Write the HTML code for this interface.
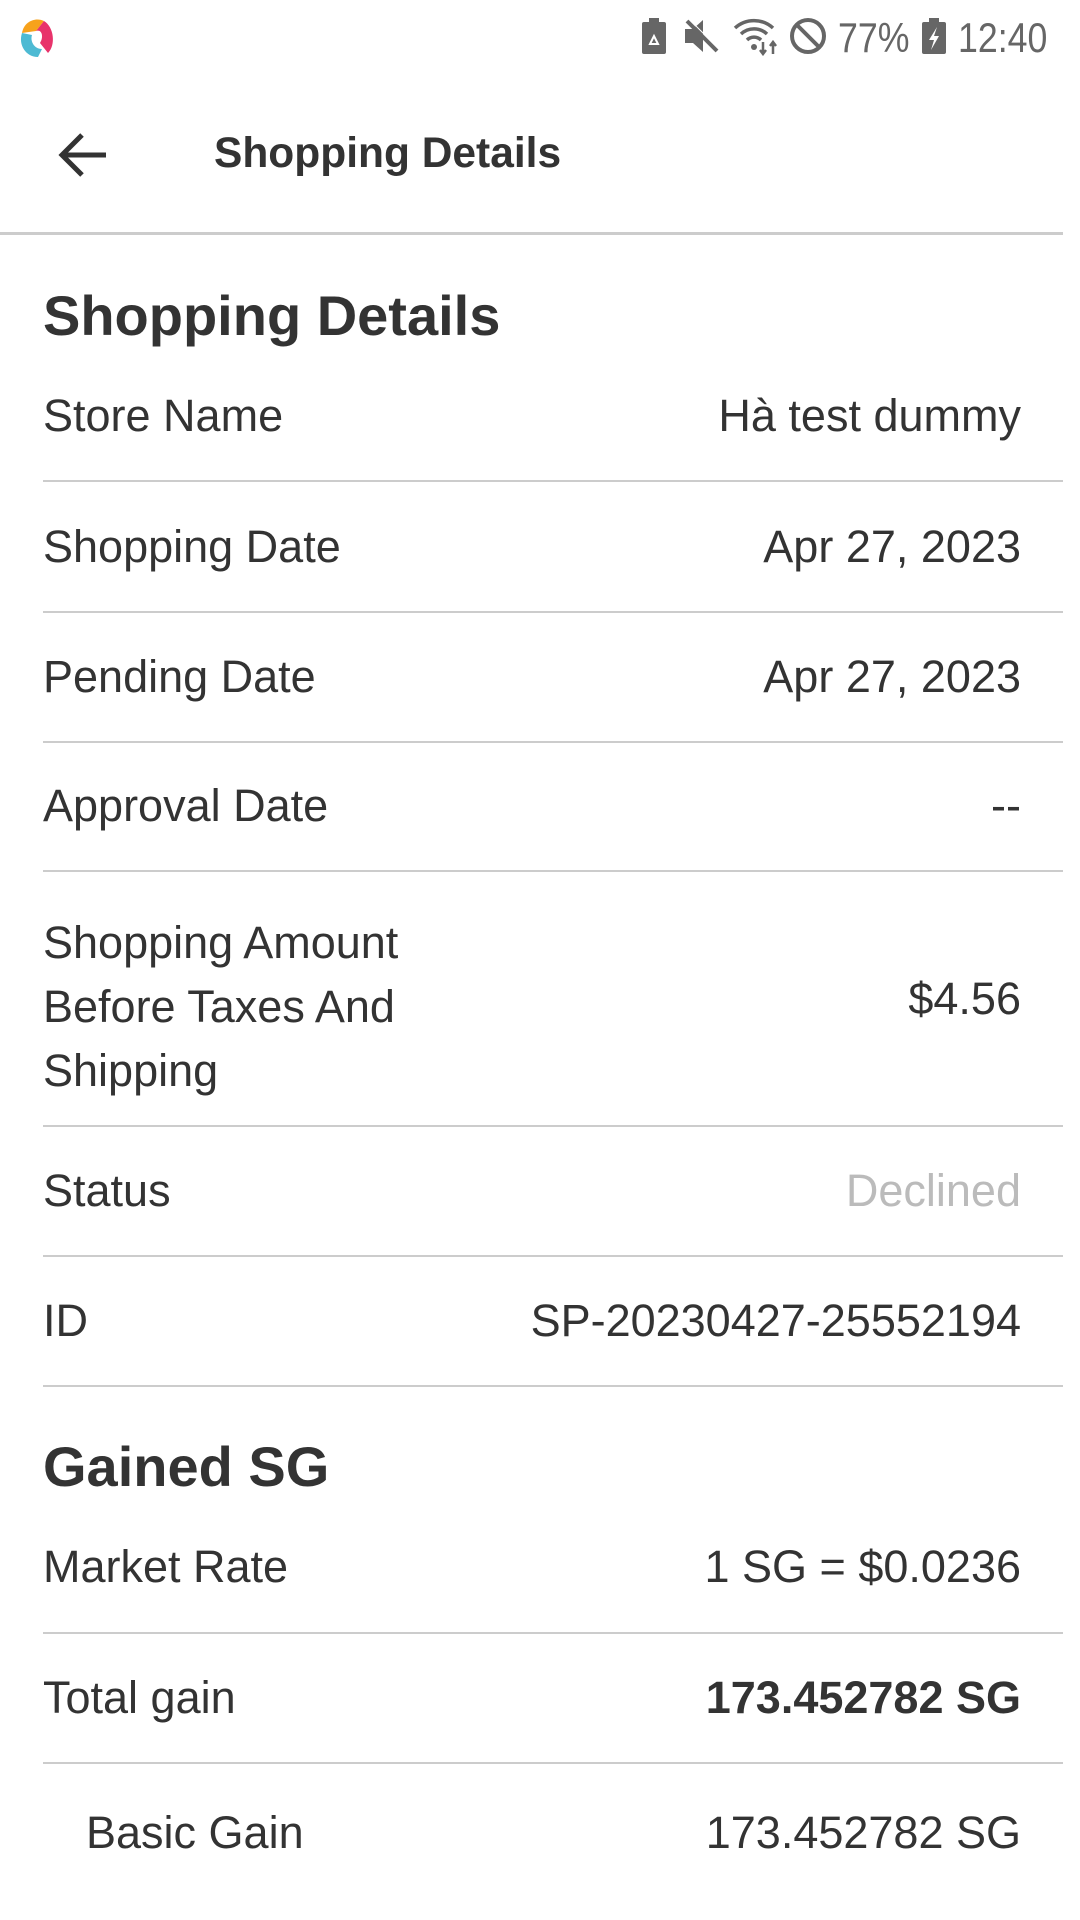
<!DOCTYPE html>
<html><head><meta charset="utf-8">
<style>
*{margin:0;padding:0;box-sizing:border-box}
body{width:1080px;height:1920px;background:#fff;font-family:"Liberation Sans",sans-serif;color:#333;position:relative;overflow:hidden}
.a{position:absolute;white-space:nowrap}
.sb{color:#666;font-size:42px;top:14px;transform:scaleX(0.85);transform-origin:left top}
.l{left:43px;font-size:45px;line-height:48px}
.r{right:59px;font-size:45px;line-height:48px;text-align:right}
.ln{position:absolute;left:43px;width:1020px;height:2px;background:#ccc}
.h{left:43px;font-size:56px;font-weight:bold;color:#333;line-height:64px}
</style></head><body>
<svg class="a" style="left:14px;top:15px" width="46" height="44" viewBox="0 0 46 44">
<path d="M8 18 C10 6 22 2 30 6 L22 16 Z" fill="#f7a21b"/>
<path d="M30 6 C40 12 42 30 34 38 L26 28 C30 22 28 14 22 16 Z" fill="#e8336b"/>
<path d="M8 18 C4 30 12 42 24 42 L28 34 C20 34 16 26 18 20 Z" fill="#4dbad3"/>
</svg>
<svg class="a" style="left:642px;top:18px" width="24" height="36" viewBox="0 0 24 36"><rect x="0" y="4" width="24" height="32" rx="2" fill="#666"/><rect x="7" y="0" width="10" height="5" fill="#666"/><path d="M8 26 L12 18 L16 26 Z" fill="none" stroke="#fff" stroke-width="2"/></svg>
<svg class="a" style="left:683px;top:18px" width="36" height="36" viewBox="0 0 36 36"><path d="M2 11 H10 L20 2 V34 L10 25 H2 Z" fill="#666"/><path d="M4 3 L34 33" stroke="#666" stroke-width="4"/><path d="M4 3 L34 33" stroke="#fff" stroke-width="1" transform="translate(2,-2)"/></svg>
<svg class="a" style="left:733px;top:16px" width="46" height="40" viewBox="0 0 46 40"><path d="M2 12 A28 28 0 0 1 40 12 M8 18 A19 19 0 0 1 34 18 M14 24 A10 10 0 0 1 28 24" fill="none" stroke="#666" stroke-width="3.5"/><circle cx="21" cy="31" r="3" fill="#666"/><path d="M30 26 V38 M27 34 L30 38 L33 34 M40 38 V26 M37 30 L40 26 L43 30" stroke="#666" stroke-width="2.5" fill="none"/></svg>
<svg class="a" style="left:789px;top:17px" width="38" height="38" viewBox="0 0 38 38"><circle cx="19" cy="19" r="16" fill="none" stroke="#666" stroke-width="4"/><path d="M8 8 L30 30" stroke="#666" stroke-width="4"/></svg>
<div class="a sb" style="left:838px">77%</div>
<svg class="a" style="left:922px;top:18px" width="24" height="36" viewBox="0 0 24 36"><rect x="0" y="4" width="24" height="32" rx="2" fill="#666"/><rect x="7" y="0" width="10" height="5" fill="#666"/><path d="M15 9 L7 22 H12 L9 32 L17 18 H12 Z" fill="#fff"/></svg>
<div class="a sb" style="left:958px">12:40</div>

<svg class="a" style="left:58px;top:132px" width="50" height="46" viewBox="0 0 50 46"><path d="M48 23 H6 M24 3 L4 23 L24 43" fill="none" stroke="#333" stroke-width="5"/></svg>
<div class="a" style="left:214px;top:130px;font-size:42.5px;font-weight:bold;color:#333;line-height:48px">Shopping Details</div>
<div style="position:absolute;left:0;top:232px;width:1063px;height:3px;background:#ccc"></div>

<div class="a h" style="top:284px">Shopping Details</div>
<div class="a l" style="top:392px">Store Name</div><div class="a r" style="top:392px">Hà test dummy</div>
<div class="ln" style="top:480px"></div>
<div class="a l" style="top:523px">Shopping Date</div><div class="a r" style="top:523px">Apr 27, 2023</div>
<div class="ln" style="top:611px"></div>
<div class="a l" style="top:653px">Pending Date</div><div class="a r" style="top:653px">Apr 27, 2023</div>
<div class="ln" style="top:741px"></div>
<div class="a l" style="top:782px">Approval Date</div><div class="a r" style="top:782px">--</div>
<div class="ln" style="top:870px"></div>
<div class="a l" style="top:911px;line-height:64px">Shopping Amount<br>Before Taxes And<br>Shipping</div><div class="a r" style="top:975px">$4.56</div>
<div class="ln" style="top:1125px"></div>
<div class="a l" style="top:1167px">Status</div><div class="a r" style="top:1167px;color:#bbb">Declined</div>
<div class="ln" style="top:1255px"></div>
<div class="a l" style="top:1297px">ID</div><div class="a r" style="top:1297px">SP-20230427-25552194</div>
<div class="ln" style="top:1385px"></div>
<div class="a h" style="top:1435px">Gained SG</div>
<div class="a l" style="top:1543px">Market Rate</div><div class="a r" style="top:1543px">1 SG = $0.0236</div>
<div class="ln" style="top:1632px"></div>
<div class="a l" style="top:1674px">Total gain</div><div class="a r" style="top:1674px;font-weight:bold">173.452782 SG</div>
<div class="ln" style="top:1762px"></div>
<div class="a l" style="top:1809px;left:86px">Basic Gain</div><div class="a r" style="top:1809px">173.452782 SG</div>
</body></html>
